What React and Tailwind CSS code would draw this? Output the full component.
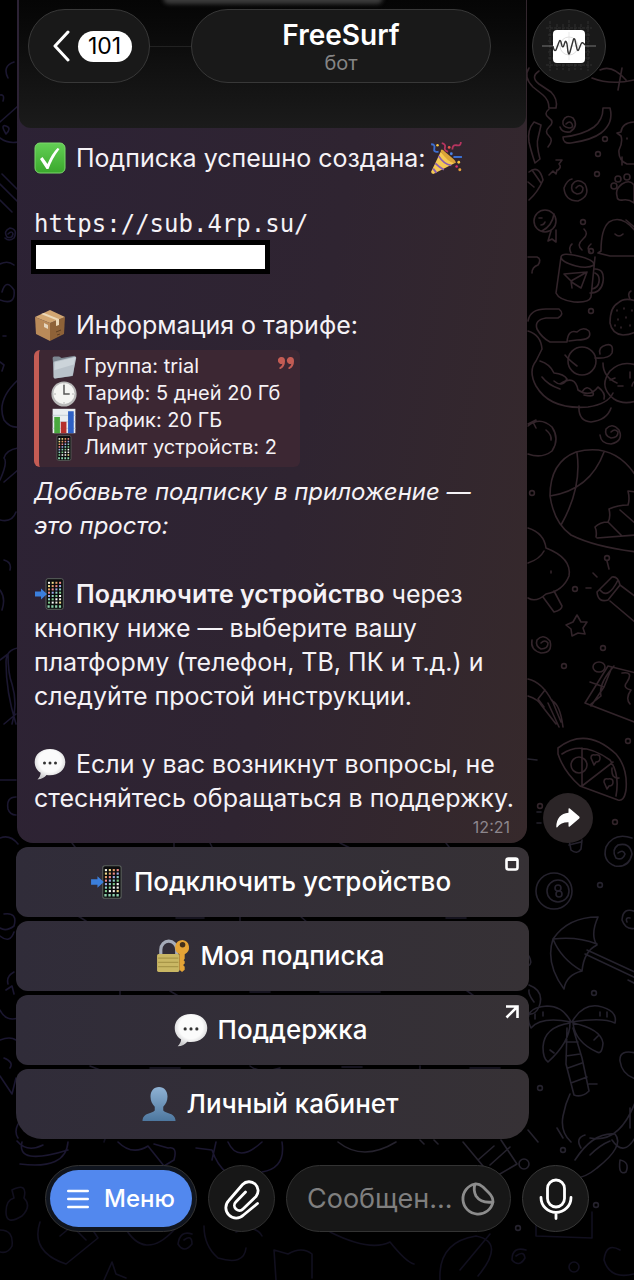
import { useState } from "react";

function Wallpaper() {
  return (
    <svg
      className="absolute inset-0 w-full h-full"
      viewBox="0 0 634 1280"
      preserveAspectRatio="xMidYMin slice"
      fill="none"
      strokeWidth="1.6"
      strokeLinecap="round"
      strokeLinejoin="round"
      aria-hidden="true"
    >
      <g stroke="#32242a">
        {/* streamers and swirls */}
        <path d="M539 71q-9 6 0 13l12 8q7 7 5 16h-7q0-8-6-13l-10-8q-10-10-4-19" />
        <path d="M592 78q20 8 46 1M600 70q12-6 26 10M622 68l-4 22" />
        <path d="M603 108h7q4 15-9 25-9 7-30 10-8 1-8-6 20-2 31-10 9-7 9-19z" />
        <path d="M549 109q-6 5 0 9t0 9q-5 5 0 9t-1 11" />
        <path d="M534 122q-7 8-5 20 2 9 6 21l5-4q-4-15-2-21 2-8 3-13z" />
        <path d="M566 124q4-4 6 0t-3 4q-7-1-6-7 3-7 10-3 6 8-3 14-8 1-10-5" />
        <path d="M556 160h6l-3 4q3 3-1 6M549 175l4-4 3 3 1-4" />
        <path d="M576 188q4-5 7 0 0 6-6 6-7-2-5-9 5-8 13-1 6 12-7 17-13 0-14-13 3-8 8-9" />
        {/* chick */}
        <path d="M636 122q-14 0-15 10l-4 1 4 3q2 6-2 14-1 10 8 14h12M622 157v8M627 138v1" />
        {/* paw */}
        <path d="M617 196q-2-7 5-12 8-5 12 1v18q-5-4-11-3-6 1-6-4z" />
        <circle cx="614" cy="186" r="3" /><circle cx="618" cy="179" r="3" /><circle cx="627" cy="177" r="3" />
        <path d="M529 172q10-8 14 8-5 12-14 20M532 170l9 13M528 182l6 5" />
        {/* fish */}
        <circle cx="545" cy="221" r="11" />
        <path d="M554 214q-2 12-12 17M551 231l-3 10 4-2 4 3v-12M539 218h3M541 225q3 0 4-3" />
        {/* sleeping bird */}
        <path d="M636 232q-14-18-27-10-8 7-8 29l-3 2 12 3h26M615 234q4 4 8 0M626 220l12 10" />
        {/* mug */}
        <path d="M561 257q1-5 17-1 17 4 16 9-6 4-18 1-15-4-15-9l-5 36q3 7 18 9 15 1 17-5l4-40M595 269q10 0 8 13-2 11-13 11M595 273q5 2 4 9-1 6-7 7" />
        <path d="M564 274l23-2-6 16-8-5zM587 272l-16 9 1 7M571 253q-3-6 1-9M582 250q-6-5 1-11 6-5 1-10M590 252q-4-4 1-8" />
        <path d="M528 257h9q5 2 1 8-6 2-6 8" />
        {/* strawberry */}
        <path d="M636 301q-12-4-18 2-8 4-8 20 2 11 13 12 8 0 14-4M630 299q-3-6 1-8M617 310v1M624 308v1M618 319v1M626 317v1M621 327v1M630 325v1M632 310v1M615 325v1" />
        {/* cat on a branch */}
        <path d="M528 331q13 4 14 18l-6 12q-8 10 0 25 14 24 52 21 20-3 25-14M528 321q2-12 18-12h13q6 5-1 9h-12q-12 2-9 11 5 9 13 13h17q1-13 10-10 6-6 12-1 4 9-12 9l-8 1" />
        <circle cx="582" cy="361" r="14" />
        <path d="M595 358q14 1 17-5 2-10-6-8-8 2-6 9M540 361q10 3 14 12 10 1 13 6-5 9-13 2M560 389q-12-4-18-12M577 366q-8-6-12-11M603 363q0 14 14 20M560 384q15-10 18 6 12 8 20-3 8 6 6 12M582 392q5-8 10-1t-8 4" />
        <path d="M636 365q-15-5-26 6-12 16 4 28 9 6 22 2M579 406q-1 15 12 16 16-2 20-14M610 380l5-2M618 386h5M630 372v6M632 386q2-8 4 0" />
        {/* tomato */}
        <path d="M528 426q12-10 24 1 8 12 0 24-10 8-24 3M536 420l-8 4M533 422l3 6M546 430q6 5 5 10" />
        <path d="M611 432q4-4 7 0 0 6-7 6-7-2-5-9 6-7 13 1 5 11-8 14-10 0-11-9" />
        {/* ball and web */}
        <path d="M636 476q-22-34-60-24-26 10-26 44 4 27 21 39 24 12 66 17M577 453q5 35-16 72M550 496q40-6 54-44M636 492l-8-1q2 8 0 14-10 0-19 4 2 8-1 13-8 0-13 5 2 4 1 10M597 538l39-3M620 510l16 14M608 522l14 14" />
        {/* tree */}
        <path d="M528 528q16 5 18 20 26 10 23 28-6 15-23 18-10 9-18 4M528 563q12-4 16-12M543 597l11 15q8-2 8-6l-8-15M551 571v2" />
        {/* flashlight */}
        <path d="M597 592l15-15q6-1 8 8l-12 15q-10 3-11-8zM600 590q8 10 18-10M610 601l26 22M620 585l16 12M607 561l2 8M593 573l4 4M586 588h5" />
        <path d="M577 615l4 7h6l-4 6 2 6-7-1-6 3-1-7-5-4 7-3z" />
        <path d="M541 643q4-4 7 0 0 6-7 6-6-3-4-9 6-7 13 1 3 12-9 12-11-3-9-13" />
        {/* milk box and fork */}
        <path d="M636 673l-28-7-23 37 52 20M590 682l14 5 8-20M604 687l-13 19M614 666q-16 18-13 30l-10 8M622 673q12-2 5 9-5 6 4 8-6 8-1 14" />
        <ellipse cx="599" cy="667" rx="6" ry="5" />
        <path d="M528 679q14 3 24 22 8 3 11 26M528 696q10 3 14 10l14 18M545 690l-7 9 6 8M552 700l9 22M548 703l11 24" />
        {/* pizza */}
        <path d="M558 748q28-22 58 6 12 14 10 36-2 12-8 10l-38-14q-16-14-22-32zM562 754q20-14 48 6 10 14 6 36M582 748v38l31-24M619 778q-8 1-7-10" />
        <circle cx="579" cy="765" r="8" />
        <path d="M591 758q0-4 4-3 5-1 5 3 0 4-4 4l-2 3zM604 782q0-4 4-3 5-1 5 3 0 4-4 4l-2 3z" />
        {[[583, 222], [591, 251], [597, 174], [532, 493], [607, 558], [564, 666], [603, 648], [575, 589], [605, 139], [598, 154], [628, 741], [615, 822], [591, 311], [540, 806]].map(([x, y]) => (
          <circle key={`${x}-${y}`} cx={x} cy={y} r="2.4" />
        ))}
      </g>

      <g stroke="#25222d">
        <path d="M569 840l2 10q6 5 10-1l1-9M569 845l12-3M528 759l9 1M537 812h4M537 823h4" />
        <path d="M618 853q5-4 7 1-2 7-9 4-5-8 2-13 12-3 14 9-3 14-17 12-13-5-9-19 8-15 26-9" />
        <circle cx="554" cy="891" r="18" /><circle cx="558" cy="891" r="11" /><circle cx="558" cy="888" r="3" /><circle cx="559" cy="894" r="3" />
        <path d="M636 912q-13-6-14 8 4 11 14 8M630 918q-5-1-3 4" />
        {/* umbrella */}
        <path d="M598 917q-30 0-45 22-8 24 11 50 2-14 18-18 2-20 15-26-7-10 1-28zM553 939q24-3 44 5M553 939q8 20 29 32M585 954l51 24M587 950l50 23M628 980l8 4" />
        {/* palm */}
        <path d="M571 1022q-8-16-24-16-26 2-16 22 10-12 40-6zM572 1022q10-18 26-16 20 4 17 17-12-6-43-1zM570 1023q-26 4-27 24 0 12 5 15 22-20 22-39zM573 1023q28 6 30 20-1 12-6 9-22-10-24-29zM567 1028l-1 36 8 31q8 3 15-4l-7-33-9-30M566 1042h12M566 1056l14-2M568 1068l14-5M571 1083l16-6M589 1084h8M570 1094l-4 10-3 12q-3 16 8 26M535 1014v5M543 1012v4M607 1017v-5M600 1016v-4M550 1050l4 3M594 1040l4-4" />
        <path d="M636 1053q-17-4-16 8 2 14 16 18M636 1100q-16 44-46 38M630 1108v20M612 1140q12 18 24-4M528 1130l10 12M529 956q4 8-1 10M529 985q16 6 10 22-4 8-10 7M534 1002q-6-8-5-12" />
        <path d="M575 1160q18-28 40-26 10 12-18 34-12 10-22 10M590 1155q10-10 20-14M620 1160q-2 16 6 12 4-10-6-12M557 1128l6 10M581 1148q-6-10 4-13" />
        {[[600, 885], [594, 993], [540, 1088], [563, 1150], [596, 1205], [518, 1228]].map(([x, y]) => (
          <circle key={`${x}-${y}`} cx={x} cy={y} r="2.4" />
        ))}
        <path d="M463 1142l30 36 24-14-16-24M478 1160l16-14M338 1142q25 20 58 0M420 1140l4 4M434 1140l4 4M490 1165l20-18" />
        <circle cx="524" cy="1164" r="5" />
      </g>

      <g stroke="#1b1730">
        <path d="M14 62q-12 4-6 16M0 95q5-1 3 6M0 122l18-16M0 138q8 6 18 4M6 134q-6-10 0-8 6 2 0 8M0 184l18 18M2 174l16 16M0 200l12 12" />
        <path d="M8 234q4-4 5 0-1 5-6 3-4-6 3-9 8 1 4 10-5 4-9 0M0 264q8-4 14 1M0 300q16 6 14-10-8-12-12 2M3 336h3M0 362l4 3-2 6M18 380q-22 20-14 40 6 8 14 7M18 448q-12 2-14 10 4 4-4 22M18 470l-14 12" />
        <path d="M0 520q12 3 16-8M4 560q8 2 6 10M0 590q6 8 2 20M0 660l8-6q0 20 4 30 6 20 0 40M18 648q-12 2-12 14 0 30 10 62M4 724l12-10M0 780h16M16 797q-10 0-8 12 2 6 8 6M0 838q10-4 18 6" />
        <path d="M4 914q14-2 10 12-8 6-14 2M0 936q10 8 14-4M14 972q-8 4-6 12M6 990l6-4 2 8M0 1010q6 12 18 8M0 1040q10-4 16 0M4 1058q10 4 6 10M0 1076l12 18 4-16M18 1124q-4 8 0 14" />
        {/* planet, spoon and star under the keyboard */}
        <path d="M17 1141q10 12 26 4M22 1142q-6 24 46 8M20 1164q46 6 48-22M118 1142q14 14 30 4l16 20 10-6q4-14-6-12l-14-4M196 1148l16 2q10 30 40 32M216 1142l-4 18M262 1172q24-4 20-30M228 1142q10 22 34 0" />
      </g>

      <g stroke="#110f1e">
        <path d="M12 1190q16-8 12 8 8 8-2 18-16 10-16-4 0-12 8-14zM0 1230q14 0 12 16-4 8-12 6M40 1222q-10 30 26 42l32-26-12-18M60 1236l12-10 14 14M124 1226q20 36 50 4M184 1240q8-6 8 4-8 10-14 0 2-14 14-10M204 1226q0 20 14 32 26 8 28-10M236 1232q20-8 26 4M104 1280l8-18 4 12 10 4M276 1280l-2-30 14 4q14-8 24 0v24M330 1232q40 20 60 10 16 20 24 22M440 1280q-2-38 36-44 30 6 2 40M460 1270l30-36" />
        <path d="M516 1256q8-6 9 2-6 10-13 2 0-14 14-10M536 1224v12l56 2v-26M620 1250q-14-8-16 10 6 20 30 14M104 1142l4-12" />
        <circle cx="574" cy="1267" r="5" />
      </g>

      {/* bits that show between the keyboard rows */}
      <path
        stroke="#1d1a29"
        d="M72 843l6 8M174 843v8M210 843l4 8M340 843l16 8M446 843l6 8M78 916l8 5M176 918h28M240 916v7M300 916l8 7M446 918h20M120 991v4M170 991l10 6M250 992h20M320 992h60M466 990l8 6M90 1066l10 4M150 1068h30M250 1066q10 8 30 2M342 1067h20M420 1066v6M470 1068h30"
      />
    </svg>
  );
}

function Emoji({ label, box = "0 0 32 32", className = "w-8 h-8", children }) {
  return (
    <svg
      role="img"
      aria-label={label}
      viewBox={box}
      className={`inline-block shrink-0 ${className}`}
    >
      {children}
    </svg>
  );
}

const inText = "w-8 h-8 mr-[3px] -my-2 align-[1px]";
const inQuote = "w-[26px] h-[26px]";
const inKey = "w-[34px] h-[34px]";

const CheckEmoji = () => (
  <Emoji label="Готово" className={inText}>
    <defs>
      <linearGradient id="check" x1="0" y1="0" x2="0" y2="1">
        <stop offset="0" stopColor="#63cf55" />
        <stop offset="1" stopColor="#3aa82c" />
      </linearGradient>
    </defs>
    <rect x="1" y="1" width="30" height="30" rx="5" fill="url(#check)" stroke="#7dd86c" />
    <path d="M6 17l2.500-2 5 7q4-10 10-16l2 1q-7 9-11 20h-2z" fill="#fff" />
  </Emoji>
);

const PartyEmoji = () => (
  <Emoji label="Праздник" className="w-[34px] h-[34px] -ml-1 -my-2 align-[0px]">
    <path d="M11 10L2 29q0 2 2 2l20-10z" fill="#f5ca52" />
    <path d="M11 10q0-4 4 0l8 7q4 4 1 4-6-1-13-11z" fill="#dca438" />
    <path d="M9 14q5 8 12 9M6 21q4 4 8 6M4 26l3 4" stroke="#8a5fb0" strokeWidth="1.7" fill="none" />
    <path d="M2 3q4 0 3 4t4 3M23 15h8" stroke="#3c6fd0" strokeWidth="1.8" fill="none" />
    <path d="M12 2q4 1 3 4t3 4M22 8q0-5 4-4t4-3" stroke="#b5345f" strokeWidth="1.7" fill="none" />
    <circle cx="8" cy="4" r="1.2" fill="#f5c542" /><circle cx="19" cy="6" r="1.3" fill="#e8574a" />
    <circle cx="21" cy="12" r="1.3" fill="#4b83e6" /><circle cx="28" cy="20" r="1.3" fill="#f5c542" />
    <circle cx="26" cy="24" r="1.2" fill="#d6336c" /><circle cx="29" cy="27" r="1.4" fill="#e8a13c" />
  </Emoji>
);

const BoxEmoji = () => (
  <Emoji label="Посылка" className={inText}>
    <path d="M1 8l15 6v18L2 25z" fill="#b98a59" />
    <path d="M31 8l-15 6v18l14-7z" fill="#8e6238" />
    <path d="M1 8l15-7 15 7-15 6z" fill="#d2a672" />
    <path d="M7 5l3-1 15 6v6l-3 1v-6z" fill="#ecd9b9" />
    <path d="M10 14l4 2v4l-4-2z" fill="#e6d6bf" />
    <path d="M22 23l5-2M23 26l3-1" stroke="#5f3f22" />
  </Emoji>
);

const FolderEmoji = () => (
  <Emoji label="Папка" className={inQuote}>
    <path d="M2 5q0-2 2-2h6l3 2 16-3 1 3-3 22L4 30z" fill="#7d8791" />
    <path d="M5 9l25-6q1 0 1 2l-4 20q0 2-2 2L5 30q-2 0-2-2V11q0-2 2-2z" fill="#b9c2ca" />
    <path d="M5 10l25-6-2 9L4 20z" fill="#ccd4da" />
  </Emoji>
);

const ClockEmoji = () => (
  <Emoji label="Часы" className={inQuote}>
    <circle cx="16" cy="16" r="15.5" fill="#b8b8b8" />
    <circle cx="16" cy="15.5" r="13" fill="#f4f4f2" />
    <path d="M16 5v11h7" stroke="#555" strokeWidth="1.8" fill="none" />
    <path d="M16 3v2M16 26v2M4 16h2M26 16h2" stroke="#999" />
  </Emoji>
);

const ChartEmoji = () => (
  <Emoji label="График" className={inQuote}>
    <rect x="2" y="1" width="28" height="30" fill="#e9edf0" />
    <path d="M2 9h28M2 17h28M2 25h28" stroke="#bcc8d0" />
    <rect x="4" y="11" width="7" height="20" fill="#49a83e" />
    <rect x="12" y="17" width="7" height="14" fill="#b5302c" />
    <rect x="21" y="4" width="7" height="27" fill="#2e60c4" />
  </Emoji>
);

const dots = ["#f4f1e8", "#8fd0c7", "#e7a06a", "#fff", "#9fa8e8", "#f0dc8b", "#7fc98a", "#e88"];

function PhoneShape() {
  return (
    <>
      <rect x="12" y="0.7" width="17.3" height="30.6" rx="2" fill="#0c0d0e" stroke="#5c635e" />
      {Array.from({ length: 28 }, (_, i) => (
        <rect
          key={i}
          x={14 + (i % 4) * 3.7}
          y={3.8 + Math.floor(i / 4) * 3.3}
          width="2"
          height="2"
          fill={dots[(i * 5 + (i >> 2)) % 8]}
        />
      ))}
      <path d="M13.5 28.5h14" stroke="#8fd3b0" strokeWidth="2.4" strokeDasharray="2.2 1.6" />
    </>
  );
}

const PhoneEmoji = () => (
  <Emoji label="Телефон" box="4.7 0 32 32" className={inQuote}>
    <PhoneShape />
  </Emoji>
);

const PhoneArrowEmoji = ({ className }) => (
  <Emoji label="Телефон со стрелкой" className={className}>
    <PhoneShape />
    <path d="M1 13.500h6V10.500l6 5.500-6 5.500V18.500H1z" fill="#3b7fdc" />
  </Emoji>
);

const SpeechEmoji = ({ className }) => (
  <Emoji label="Сообщение" className={className}>
    <defs>
      <radialGradient id="speech" cx="0.5" cy="0.4" r="0.6">
        <stop offset="0.6" stopColor="#fbfbfb" />
        <stop offset="1" stopColor="#c9c9cb" />
      </radialGradient>
    </defs>
    <path
      d="M16 1C7 1 .7 6.500.7 14c0 5 2.500 8.600 6 10.800 0 2.500-1.500 5-3.200 6.600 4 0 7-2 9-4.400 11 1.500 18.800-4.500 18.800-13C31.300 6.500 25 1 16 1z"
      fill="url(#speech)"
    />
    <circle cx="10.500" cy="15" r="1.500" fill="#333" />
    <circle cx="16" cy="15" r="1.500" fill="#333" />
    <circle cx="21.500" cy="15" r="1.500" fill="#333" />
  </Emoji>
);

const LockEmoji = () => (
  <Emoji label="Замок с ключом" className={inKey}>
    <path d="M4.500 15V10a7.500 8 0 0 1 15 0v5" fill="none" stroke="#a5abb8" strokeWidth="3" />
    <rect x="1" y="14" width="21" height="17" rx="1.500" fill="#c9b764" />
    <path d="M2 18h19M2 22h19M2 26h19" stroke="#a89648" />
    <path d="M25 1a7 7 0 0 0-3 13.300V29l2.500 2 2.500-2v-3l-1.500-1.500L27 23v-2l-1-1 1-1.500V14.300A7 7 0 0 0 25 1z" fill="#e5a436" />
    <circle cx="25" cy="5.500" r="2.600" fill="#43301a" />
  </Emoji>
);

const PersonEmoji = () => (
  <Emoji label="Профиль" className={inKey}>
    <defs>
      <linearGradient id="person" x1="0" y1="0" x2="0" y2="1">
        <stop offset="0" stopColor="#8fb2d4" />
        <stop offset="1" stopColor="#4d779f" />
      </linearGradient>
    </defs>
    <path
      d="M16 0c-5 0-8 4-8 9 0 4 1.500 7 4 9.500v3.500c-2 3-11 2-11.500 9V32h31v-1c-.5-7-9.500-6-11.500-9v-3.500C22.500 16 24 13 24 9c0-5-3-9-8-9z"
      fill="url(#person)"
    />
  </Emoji>
);

function Header() {
  return (
    <header className="absolute inset-x-0 top-0 z-10 h-32">
      <div className="absolute left-[19px] right-[108px] inset-y-0 rounded-b-xl overflow-hidden bg-linear-to-b from-[#050505] via-[#101010] to-[#1b1b1b]">
        <div className="absolute -top-2 left-[144px] w-[220px] h-3 rounded-full bg-[#3c3c3c] blur-[2px]" />
        <div className="absolute top-[46px] inset-x-32 h-px bg-[#222]" />
      </div>
      <div className="relative flex items-center px-7 pt-[9px]">
        <button
          aria-label="Назад"
          className="w-[122px] h-[74px] pl-1.5 rounded-full border border-[#383838] bg-[#191919] flex items-center justify-center gap-2 cursor-pointer"
        >
          <svg viewBox="0 0 17 32" className="w-[17px] h-8" fill="none" stroke="#fff" strokeWidth="3" strokeLinecap="round" strokeLinejoin="round">
            <path d="M15 2L2 16l13 14" />
          </svg>
          <span className="w-[54px] h-[31px] rounded-full bg-white text-black text-[23px] leading-[31px] text-center">
            101
          </span>
        </button>
        <div className="flex-1 mx-[41px] h-[74px] rounded-full border border-[#383838] bg-[#191919] flex flex-col items-center pt-[9px]">
          <h1 className="text-[28px] leading-8 font-semibold text-white">FreeSurf</h1>
          <p className="text-[20px] leading-6 text-[#858585]">бот</p>
        </div>
        <button
          aria-label="Профиль бота"
          className="w-[74px] h-[74px] rounded-full border border-[#383838] bg-[#191919] overflow-hidden cursor-pointer"
        >
          <svg viewBox="0 0 72 72" className="w-full h-full" fill="none">
            <path
              d="M17 11v50M13 18h46M13 55h46M55 11v50M36 10v52M24 14v46M30 14v46M42 14v46M48 14v46M15 25h42M15 31h42M15 42h42M15 48h42"
              stroke="#353535"
              strokeWidth="0.8"
              strokeDasharray="3 1"
            />
            <path d="M9 36h54" stroke="#777" />
            <rect x="20" y="20" width="32" height="33" rx="4" fill="#fff" />
            <circle cx="36" cy="36" r="9" stroke="#ccc" strokeWidth="0.6" />
            <path d="M36 22v28M22 36h28" stroke="#ddd" strokeWidth="0.6" />
            <path
              d="M20 36q1 6 3 4l3-8q1-3 2 0l1 4q1 2 2-1l1-3q1-2 2 2l1 8q1 4 2 0l3-11q1-4 2-1l2 9q1 3 2 0l2-5q1-3 4 1"
              stroke="#333"
              strokeWidth="1.400"
            />
          </svg>
        </button>
      </div>
    </header>
  );
}

function TariffQuote() {
  const rows = [
    [FolderEmoji, "Группа: trial"],
    [ClockEmoji, "Тариф: 5 дней 20 Гб"],
    [ChartEmoji, "Трафик: 20 ГБ"],
    [PhoneEmoji, "Лимит устройств: 2"],
  ];
  return (
    <blockquote className="relative mt-2 mb-2 w-[266px] pt-[3px] pb-1.5 pl-3 border-l-[5px] border-[#c45c54] rounded-md bg-[#3c2733]">
      {rows.map(([Icon, text]) => (
        <p key={text} className="flex items-center gap-[7px] h-[27px] text-[20px] leading-[27px] whitespace-nowrap">
          <Icon />
          {text}
        </p>
      ))}
      <svg viewBox="0 0 16 13" className="absolute top-[7px] right-1.5 w-4 h-[13px]" fill="#c45c54" aria-hidden="true">
        <path d="M3.500 0a3.500 3.500 0 1 0 1 6.800Q4 9 1.500 10.500q-.5 1.500 1 1.500Q7 10 7 4 7 0 3.500 0zM12.500 0a3.500 3.500 0 1 0 1 6.800q-.5 2.200-3 3.700-.5 1.500 1 1.500Q16 10 16 4q0-4-3.500-4z" />
      </svg>
    </blockquote>
  );
}

function Message() {
  return (
    <div className="flex items-end gap-4 pl-[17px] pr-[41px]">
      <article className="flex-1 min-w-0 pt-[141px] pl-[17px] pr-3 pb-1 rounded-b-2xl bg-linear-[100deg] from-[#2c2235] via-[#2f2431] via-55% to-[#36292b] text-[25px] leading-[34px] text-[#f5f2f6]">
        <p>
          <CheckEmoji /> Подписка успешно создана: <PartyEmoji />
        </p>
        <a
          href="#subscription"
          className="block mt-[34px] text-[24px] leading-[31px] font-['DejaVu_Sans_Mono',monospace]"
        >
          https://sub.4rp.su/
        </a>
        <div className="-ml-[3px] w-[239px] h-[34px] border-5 border-black bg-white" />
        <p className="mt-[34px]">
          <BoxEmoji /> Информация о тарифе:
        </p>
        <TariffQuote />
        <p className="text-[24px] leading-[34px] italic">Добавьте подписку в приложение — это просто:</p>
        <p className="mt-[34px]">
          <PhoneArrowEmoji className={inText} /> <b className="font-semibold">Подключите устройство</b> через
          кнопку ниже — выберите вашу платформу (телефон, ТВ, ПК и т.д.) и следуйте простой инструкции.
        </p>
        <p className="mt-[34px]">
          <SpeechEmoji className={inText} /> Если у вас возникнут вопросы, не стесняйтесь обращаться в
          поддержку.
        </p>
        <time className="block pr-[5px] text-right text-[16px] leading-6 text-[#8d868d]">12:21</time>
      </article>
      <button
        aria-label="Переслать"
        className="w-[50px] h-[50px] rounded-full bg-[#2b2527] flex items-center justify-center cursor-pointer"
      >
        <svg viewBox="0 0 24 20" className="w-6 h-5" fill="#fff">
          <path d="M12.500 1.200q0-1.500 1.300-.6l9.400 8q.8.9 0 1.800l-9.400 8q-1.300.9-1.300-.6v-3.600Q5 14 1.300 19.300.300 20 .300 18.500.800 6 12.500 4.800z" />
        </svg>
      </button>
    </div>
  );
}

function Key({ icon, corner, last, children }) {
  return (
    <button
      className={`relative h-[70px] w-full pr-1 flex items-center justify-center gap-2.5 bg-linear-to-r from-[#302c39] to-[#363135] text-white text-[26px] leading-8 font-medium cursor-pointer ${
        last ? "rounded-t-xl rounded-b-[26px]" : "rounded-xl"
      }`}
    >
      {icon}
      {children}
      {corner}
    </button>
  );
}

function Keyboard() {
  return (
    <div className="relative flex flex-col gap-1 mt-1 pl-4 pr-[105px]">
      <Key
        icon={<PhoneArrowEmoji className={inKey} />}
        corner={
          <svg viewBox="0 0 14 14" className="absolute top-[10px] right-[10px] w-3.5 h-3.5" fill="none" stroke="#fff" aria-hidden="true">
            <rect x="1.500" y="1.500" width="11" height="11" rx="2" strokeWidth="2.600" />
            <path d="M1.500 2.500h11" strokeWidth="3" />
          </svg>
        }
      >
        Подключить устройство
      </Key>
      <Key icon={<LockEmoji />}>Моя подписка</Key>
      <Key
        icon={<SpeechEmoji className={inKey} />}
        corner={
          <svg viewBox="0 0 14 14" className="absolute top-[10px] right-[10px] w-3.5 h-3.5" fill="none" stroke="#fff" strokeWidth="2.600" aria-hidden="true">
            <path d="M1 1.500h11.500V13M12 2L1.500 12.500" />
          </svg>
        }
      >
        Поддержка
      </Key>
      <Key icon={<PersonEmoji />} last>
        Личный кабинет
      </Key>
    </div>
  );
}

function Composer() {
  const [text, setText] = useState("");

  return (
    <footer className="relative flex items-center gap-[11px] px-[45px] pt-[26px] pb-12">
      <button className="w-[152px] h-[67px] p-1 rounded-full border border-[#333] bg-[#10151f] cursor-pointer">
        <span className="flex h-full items-center justify-center gap-[15px] rounded-full bg-[#5288ee] text-white text-[24px] leading-8 font-medium">
          <svg viewBox="0 0 22 20" className="w-[22px] h-5" stroke="#fff" strokeWidth="2.400" strokeLinecap="round" aria-hidden="true">
            <path d="M1.200 2h19.600M1.200 10h19.600M1.200 18h19.600" />
          </svg>
          Меню
        </span>
      </button>
      <button
        aria-label="Прикрепить"
        className="w-[67px] h-[67px] rounded-full border border-[#303030] bg-[#171717] flex items-center justify-center cursor-pointer"
      >
        <svg viewBox="0 0 36 40" className="w-9 h-10 overflow-visible" fill="none" stroke="#fff" strokeWidth="2.800" strokeLinecap="round" strokeLinejoin="round">
          <path d="M33.500 24.500L19.500 36A10.200 10.200 0 0 1 4.800 21.500L18.600 5.500A9 9 0 0 1 32 17.500L19 30A5 5 0 0 1 11.800 23L21.500 13" />
        </svg>
      </button>
      <div className="flex-1 min-w-0 h-[67px] pl-5 pr-[15px] rounded-full border border-[#333] bg-[#171717] flex items-center gap-1">
        <input
          aria-label="Сообщение"
          placeholder="Сообщен..."
          value={text}
          onChange={(e) => setText(e.target.value)}
          className="flex-1 min-w-0 bg-transparent text-white text-[27px] leading-8 placeholder:text-[#7f7f7f] outline-none"
        />
        <button aria-label="Стикеры" className="cursor-pointer">
          <svg viewBox="0 0 34 34" className="block w-[34px] h-[34px]" fill="none" stroke="#8c8c8c" strokeWidth="2.800" strokeLinejoin="round">
            <path d="M14 2A15.200 15.200 0 1 0 32 20Q32 15 28 11L22 5Q18 1.500 14 2zM14 2Q12 8 15 14 20 21.500 32 20" />
          </svg>
        </button>
      </div>
      <button
        aria-label="Голосовое сообщение"
        className="w-[67px] h-[67px] rounded-full border border-[#383838] bg-[#171717] flex items-center justify-center cursor-pointer"
      >
        <svg viewBox="0 0 34 42" className="w-[34px] h-[42px]" fill="none" stroke="#fff" strokeWidth="2.800" strokeLinecap="round">
          <rect x="8.500" y="2" width="17" height="27" rx="8.500" />
          <path d="M2 19.500a15 15 0 0 0 30 0M17 34.500V40.500" />
        </svg>
      </button>
    </footer>
  );
}

export default function App() {
  return (
    <div className="relative min-h-screen overflow-hidden bg-black font-['Inter',sans-serif]">
      <Wallpaper />
      <Header />
      <main className="relative">
        <Message />
        <Keyboard />
      </main>
      <Composer />
    </div>
  );
}
